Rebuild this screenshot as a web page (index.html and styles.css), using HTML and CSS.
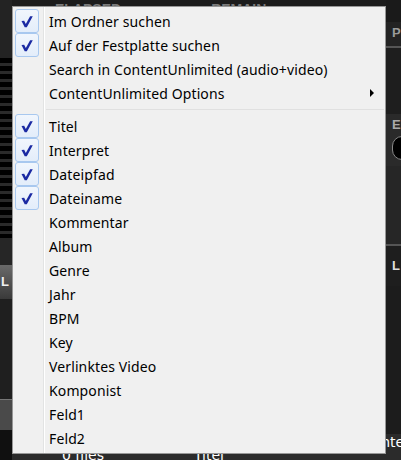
FILE: index.html
```html
<!DOCTYPE html>
<html>
<head>
<meta charset="utf-8">
<link rel="stylesheet" href="styles.css">
</head>
<body>
<div class="app">
  <div class="left">
    <div class="l-top"></div>
    <div class="l-stripes"></div>
    <div class="l-gap"></div>
    <div class="l-btn">L</div>
    <div class="l-mid"></div>
    <div class="l-box"></div>
    <div class="l-bot"></div>
  </div>
  <div class="center">
    <div class="c-top"><span class="elapsed">ELAPSED</span><span class="remain">REMAIN</span></div>
    <div class="c-body"></div>
    <div class="c-bottom"><span class="files">0 files</span><span class="titel">Titel</span></div>
  </div>
  <div class="right">
    <div class="r-top"></div>
    <div class="r-p">P</div>
    <div class="r-line"></div>
    <div class="r-dark"></div>
    <div class="r-e">E</div>
    <div class="r-knob"><div class="knob"></div></div>
    <div class="r-mid"></div>
    <div class="r-line"></div>
    <div class="r-l">L</div>
    <div class="r-low"></div>
    <div class="r-bot">Inte</div>
  </div>
</div>

<div class="menu">
  <div class="item checked"><span class="chk"><svg viewBox="0 0 24 24" width="24" height="24"><path d="M6 12 L8.9 11.7 L10.7 15.2 L15.4 6.8 L18.3 6.8 L11.8 18.9 L9.5 18.9 Z" fill="#1b2aa3"/></svg></span><span class="label">Im Ordner suchen</span></div>
  <div class="item checked"><span class="chk"><svg viewBox="0 0 24 24" width="24" height="24"><path d="M6 12 L8.9 11.7 L10.7 15.2 L15.4 6.8 L18.3 6.8 L11.8 18.9 L9.5 18.9 Z" fill="#1b2aa3"/></svg></span><span class="label">Auf der Festplatte suchen</span></div>
  <div class="item"><span class="chk empty"></span><span class="label">Search in ContentUnlimited (audio+video)</span></div>
  <div class="item sub"><span class="chk empty"></span><span class="label">ContentUnlimited Options</span><span class="arrow"></span></div>
  <div class="sep"></div>
  <div class="item checked"><span class="chk"><svg viewBox="0 0 24 24" width="24" height="24"><path d="M6 12 L8.9 11.7 L10.7 15.2 L15.4 6.8 L18.3 6.8 L11.8 18.9 L9.5 18.9 Z" fill="#1b2aa3"/></svg></span><span class="label">Titel</span></div>
  <div class="item checked"><span class="chk"><svg viewBox="0 0 24 24" width="24" height="24"><path d="M6 12 L8.9 11.7 L10.7 15.2 L15.4 6.8 L18.3 6.8 L11.8 18.9 L9.5 18.9 Z" fill="#1b2aa3"/></svg></span><span class="label">Interpret</span></div>
  <div class="item checked"><span class="chk"><svg viewBox="0 0 24 24" width="24" height="24"><path d="M6 12 L8.9 11.7 L10.7 15.2 L15.4 6.8 L18.3 6.8 L11.8 18.9 L9.5 18.9 Z" fill="#1b2aa3"/></svg></span><span class="label">Dateipfad</span></div>
  <div class="item checked"><span class="chk"><svg viewBox="0 0 24 24" width="24" height="24"><path d="M6 12 L8.9 11.7 L10.7 15.2 L15.4 6.8 L18.3 6.8 L11.8 18.9 L9.5 18.9 Z" fill="#1b2aa3"/></svg></span><span class="label">Dateiname</span></div>
  <div class="item"><span class="chk empty"></span><span class="label">Kommentar</span></div>
  <div class="item"><span class="chk empty"></span><span class="label">Album</span></div>
  <div class="item"><span class="chk empty"></span><span class="label">Genre</span></div>
  <div class="item"><span class="chk empty"></span><span class="label">Jahr</span></div>
  <div class="item"><span class="chk empty"></span><span class="label">BPM</span></div>
  <div class="item"><span class="chk empty"></span><span class="label">Key</span></div>
  <div class="item"><span class="chk empty"></span><span class="label">Verlinktes Video</span></div>
  <div class="item"><span class="chk empty"></span><span class="label">Komponist</span></div>
  <div class="item"><span class="chk empty"></span><span class="label">Feld1</span></div>
  <div class="item"><span class="chk empty"></span><span class="label">Feld2</span></div>
</div>
</body>
</html>
```

FILE: styles.css
```css
html, body {
  margin: 0;
  padding: 0;
}
body {
  width: 401px;
  height: 460px;
  overflow: hidden;
  position: relative;
  background: #1e1e1e;
  font-family: "Noto Sans", "DejaVu Sans", sans-serif;
}

.app {
  display: flex;
  width: 401px;
  height: 460px;
}

/* left strip */
.left {
  width: 12px;
  display: flex;
  flex-direction: column;
}
.l-top { height: 58px; background: #232323; }
.l-stripes {
  height: 180px;
  background: repeating-linear-gradient(#000 0 5px, #2a2a2a 5px 8px);
}
.l-gap { height: 27px; background: #262626; }
.l-btn {
  height: 34px;
  background: linear-gradient(#6a6a6a, #3a3a3a);
  color: #f0f0f0;
  font: bold 13px "Liberation Sans", sans-serif;
  line-height: 34px;
  padding-left: 1px;
}
.l-mid { height: 100px; background: #1f1f1f; }
.l-box { height: 30px; background: #4a4a4a; border-top: 1px solid #777; }
.l-bot { flex: 1; background: #101010; }

/* center */
.center {
  flex: 1;
  display: flex;
  flex-direction: column;
}
.c-top {
  height: 8px;
  background: #1c1c1c;
  overflow: hidden;
  display: flex;
  color: #7a7a7a;
  font: bold 14px "Liberation Sans", sans-serif;
  line-height: 14px;
}
.c-top span { margin-top: 2px; }
.elapsed { margin-left: 43px; }
.remain { margin-left: 90px; }
.c-body { flex: 1; background: #202020; }
.c-bottom {
  height: 14px;
  background: #2b2b2b;
  color: #fff;
  font: 14px "DejaVu Sans", sans-serif;
  line-height: 14px;
  display: flex;
  overflow: hidden;
}
.files { margin-left: 50px; margin-top: 2px; }
.titel { margin-left: 90px; margin-top: 2px; }

/* right strip */
.right {
  width: 15px;
  display: flex;
  flex-direction: column;
  color: #9a9a9a;
  font: bold 13px "Liberation Sans", sans-serif;
}
.r-top { height: 22px; background: #1a1a1a; }
.r-p { height: 24px; background: #232323; line-height: 22px; padding-left: 6px; }
.r-line { height: 2px; background: #555; }
.r-dark { height: 66px; background: #1e1e1e; }
.r-e { height: 22px; background: #2a2a2a; line-height: 22px; padding-left: 6px; color: #aaa; }
.r-knob { height: 30px; background: #2a2a2a; padding-left: 6px; }
.knob {
  width: 18px; height: 22px;
  border-radius: 11px;
  background: #000;
  border: 1px solid #888;
}
.r-mid { height: 78px; background: #262626; }
.r-l { height: 40px; background: #1e1e1e; line-height: 40px; padding-left: 6px; color: #ddd; }
.r-low { height: 148px; background: #1c1c1c; }
.r-bot {
  flex: 1;
  background: #2b2b2b;
  color: #fff;
  font: 14px "DejaVu Sans", sans-serif;
  margin-left: -9px;
  line-height: 16px;
  overflow: hidden;
}

/* menu */
.menu {
  position: absolute;
  left: 12px;
  top: 6px;
  width: 372px;
  height: 444px;
  background: #f0f0f0;
  border: 1px solid #979797;
  padding: 2px 0 0 0;
  box-sizing: content-box;
  font-size: 14px;
  letter-spacing: 0.12px;
  color: #000;
  background-image: linear-gradient(#e2e3e3, #e2e3e3), linear-gradient(#fff, #fff);
  background-size: 1px 100%, 1px 100%;
  background-position: 30px 0, 31px 0;
  background-repeat: no-repeat;
}
.item {
  height: 24px;
  display: flex;
  align-items: center;
  position: relative;
}
.chk {
  width: 22px;
  height: 22px;
  margin-left: 2px;
  border: 1px solid #a8c8ef;
  border-radius: 3px;
  background: linear-gradient(#f1f6fd, #e3edfa);
  display: flex;
  align-items: center;
  justify-content: center;
  flex: none;
}
.chk svg { display: block; }
.chk.empty { border-color: transparent; background: none; }
.label {
  margin-left: 10px;
  white-space: nowrap;
}
.arrow {
  position: absolute;
  right: 11px;
  top: 8px;
  width: 0; height: 0;
  border-left: 4px solid #000;
  border-top: 4px solid transparent;
  border-bottom: 4px solid transparent;
}
.sep {
  height: 9px;
  background: linear-gradient(#e0e0e0, #e0e0e0) no-repeat;
  background-size: calc(100% - 34px) 1px;
  background-position: 33px 4px;
}
```
